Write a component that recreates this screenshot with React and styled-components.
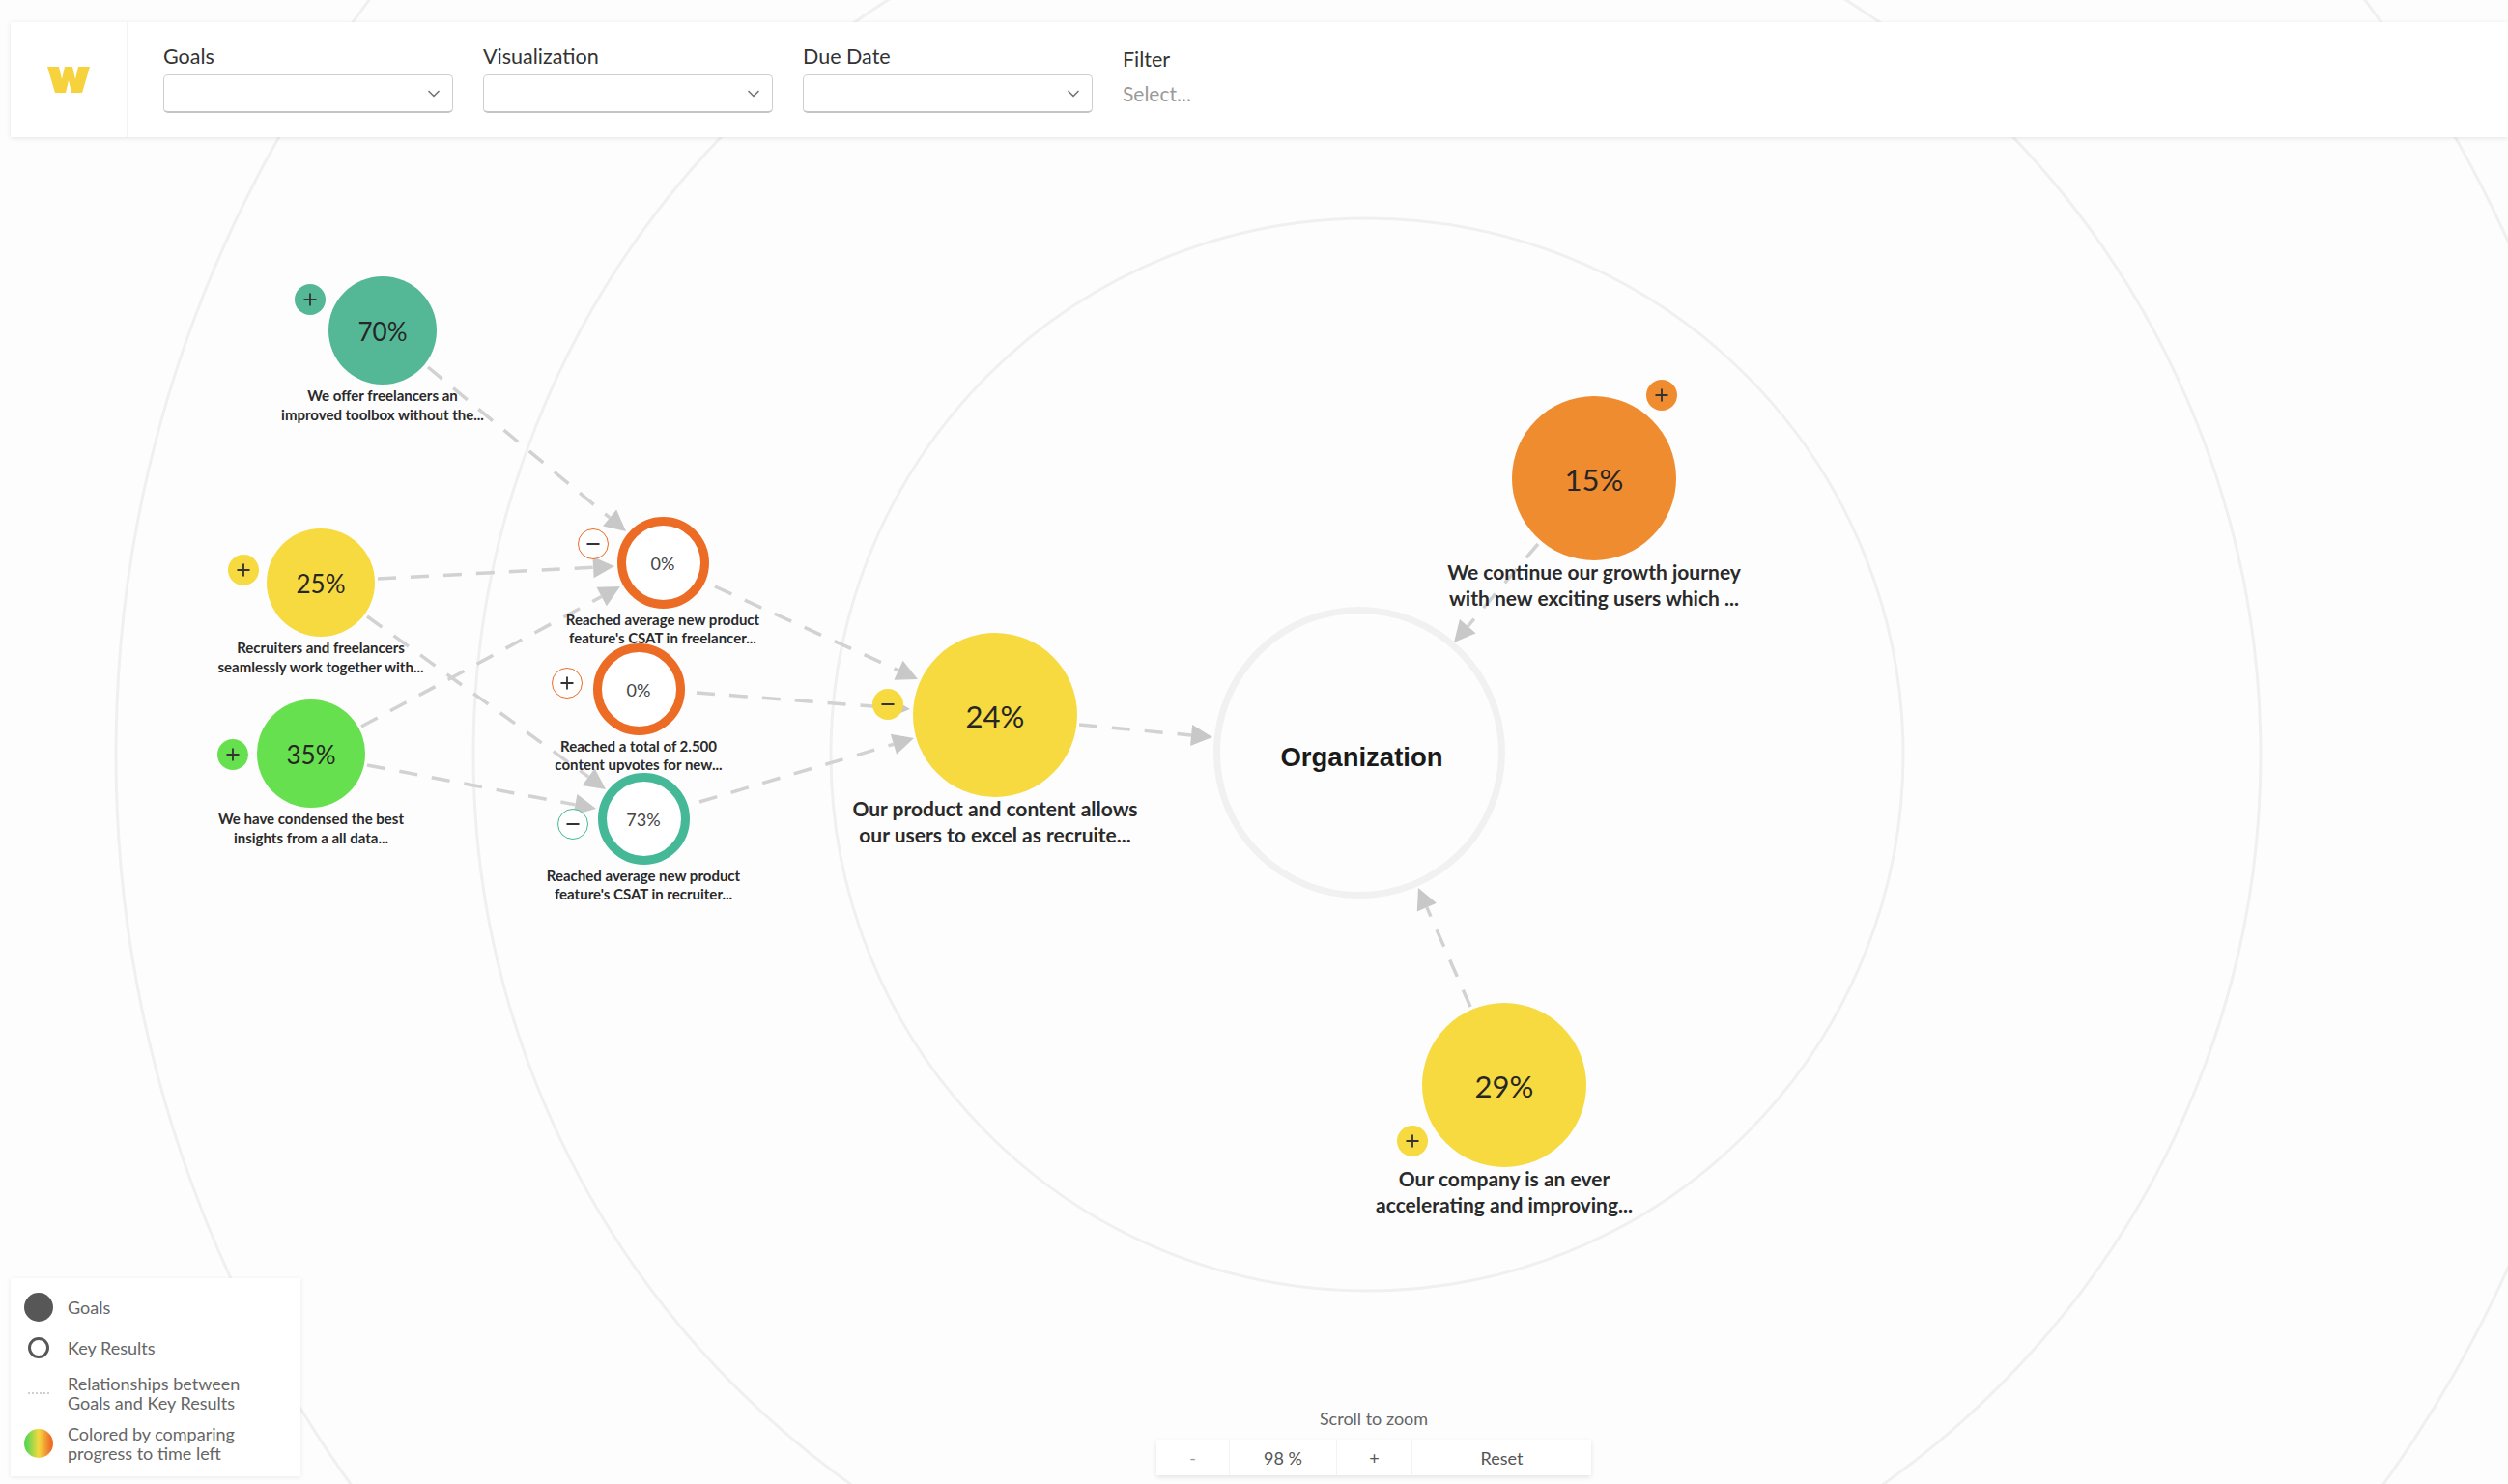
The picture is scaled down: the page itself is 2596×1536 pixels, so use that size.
import React from 'react';
import styled, { createGlobalStyle } from 'styled-components';
import { ChevronDown, Plus, Minus } from 'lucide-react';

const GlobalStyle = createGlobalStyle`
    html, body {
        margin: 0;
        padding: 0;
        background: #fdfdfd;
    }
    body {
        font-family: Lato, "Open Sans", sans-serif;
    }
`;

const YELLOW = '#f6da40';
const ORANGE = '#f08c30';
const GREEN = '#66e04e';
const TEAL = '#54b896';
const RING_ORANGE = '#ec6c26';
const RING_TEAL = '#45b898';

const CENTER = { x: 1415, y: 781 };
const RADII = [555, 925, 1295];

const EDGES = [
    [443, 380, 648, 550],
    [391, 599, 636, 586],
    [374, 752, 642, 607],
    [380, 638, 627, 817],
    [380, 792, 617, 837],
    [740, 607, 950, 703],
    [721, 717, 942, 734],
    [724, 830, 946, 764],
    [1117, 750, 1255, 763],
    [1592, 563, 1505, 665],
    [1522, 1042, 1468, 919],
];

const NODES = [
    { x: 396, y: 342, size: 112, pct: '70%', color: TEAL, badge: 'plus', bx: -75, by: -32, lines: ['We offer freelancers an', 'improved toolbox without the...'] },
    { x: 332, y: 603, size: 112, pct: '25%', color: YELLOW, badge: 'plus', bx: -80, by: -13, lines: ['Recruiters and freelancers', 'seamlessly work together with...'] },
    { x: 322, y: 780, size: 112, pct: '35%', color: GREEN, badge: 'plus', bx: -81, by: 1, lines: ['We have condensed the best', 'insights from a all data...'] },
    { x: 686, y: 582, size: 95, pct: '0%', ring: RING_ORANGE, badge: 'minus', bx: -72, by: -19, lines: ['Reached average new product', "feature's CSAT in freelancer..."] },
    { x: 661, y: 713, size: 95, pct: '0%', ring: RING_ORANGE, badge: 'plus', bx: -74, by: -6, lines: ['Reached a total of 2.500', 'content upvotes for new...'] },
    { x: 666, y: 847, size: 95, pct: '73%', ring: RING_TEAL, badge: 'minus', bx: -73, by: 6, lines: ['Reached average new product', "feature's CSAT in recruiter..."] },
    { x: 1030, y: 740, size: 170, pct: '24%', color: YELLOW, badge: 'minus', bx: -111, by: -11, large: true, lines: ['Our product and content allows', 'our users to excel as recruite...'] },
    { x: 1650, y: 495, size: 170, pct: '15%', color: ORANGE, badge: 'plus', bx: 70, by: -86, large: true, lines: ['We continue our growth journey', 'with new exciting users which ...'] },
    { x: 1557, y: 1123, size: 170, pct: '29%', color: YELLOW, badge: 'plus', bx: -95, by: 58, large: true, lines: ['Our company is an ever', 'accelerating and improving...'] },
];

const Page = styled.div`
    position: relative;
    box-sizing: border-box;
    width: 2596px;
    height: 1536px;
    overflow: hidden;
    padding: 23px 0 8px 11px;
    background: #fdfdfd;
    display: flex;
    flex-direction: column;
    justify-content: space-between;
`;

const Canvas = styled.div`
    position: absolute;
    inset: 0;
`;

const CanvasDrawing = styled.svg`
    position: absolute;
    inset: 0;
`;

const Toolbar = styled.header`
    position: relative;
    display: flex;
    height: 119px;
    background: #fff;
    box-shadow: 0 1px 5px rgba(0, 0, 0, 0.1);
`;

const LogoCell = styled.div`
    width: 120px;
    border-right: 1px solid #f3f3f3;
    display: flex;
    align-items: center;
    justify-content: center;
`;

const Fields = styled.div`
    display: flex;
    gap: 31px;
    padding: 23px 0 0 37px;
`;

const Field = styled.div`
    width: 300px;
`;

const FieldLabel = styled.div`
    height: 24px;
    line-height: 24px;
    margin-bottom: 7px;
    font-size: 21.5px;
    color: #333;
`;

const SelectBox = styled.div`
    box-sizing: border-box;
    height: 40px;
    padding-right: 9px;
    display: flex;
    align-items: center;
    justify-content: flex-end;
    background: #fff;
    color: #777;
    border: 1px solid #cfcfcf;
    border-bottom: 2px solid #c4c4c4;
    border-radius: 5px;
`;

const FilterField = styled.div`
    padding-top: 3px;
`;

const FilterValue = styled.div`
    margin-top: 12px;
    line-height: 24px;
    font-size: 21px;
    color: #9a9a9a;
`;

const Bottom = styled.div`
    position: relative;
    display: flex;
    align-items: flex-end;
`;

const Legend = styled.aside`
    box-sizing: border-box;
    width: 300px;
    padding: 15px 14px 14px;
    display: flex;
    flex-direction: column;
    gap: 12px;
    background: #fff;
    box-shadow: 0 1px 5px rgba(0, 0, 0, 0.08);
`;

const LegendRow = styled.div`
    display: flex;
    align-items: center;
    gap: 15px;
    min-height: 30px;
    font-size: 18px;
    line-height: 20px;
    color: #666;
`;

const Swatch = styled.div`
    flex: none;
    width: 30px;
    display: flex;
    justify-content: center;
`;

const GoalDot = styled.div`
    width: 30px;
    height: 30px;
    border-radius: 50%;
    background: #575757;
`;

const ResultDot = styled.div`
    box-sizing: border-box;
    width: 22px;
    height: 22px;
    border-radius: 50%;
    border: 3px solid #575757;
`;

const DottedLine = styled.div`
    width: 22px;
    border-top: 2px dotted #cfcfcf;
`;

const ProgressDot = styled.div`
    width: 30px;
    height: 30px;
    border-radius: 50%;
    background: linear-gradient(90deg, #5cd652 8%, #f4d940 50%, #ee6e26 92%);
`;

const ZoomArea = styled.div`
    margin-left: 886px;
    display: flex;
    flex-direction: column;
    align-items: center;
    gap: 10px;
`;

const ZoomHint = styled.div`
    font-size: 18px;
    line-height: 24px;
    color: #666;
`;

const ZoomBar = styled.div`
    display: grid;
    grid-template-columns: 75px 111px 78px 186px;
    height: 37px;
    margin-bottom: 1px;
    background: #fff;
    box-shadow: 0 2px 5px rgba(0, 0, 0, 0.1);
`;

const ZoomCell = styled.div`
    display: flex;
    align-items: center;
    justify-content: center;
    font-size: 18px;
    color: ${(p) => (p.$muted ? '#999' : '#555')};
    & + & {
        border-left: 1px solid #f3f3f3;
    }
`;

const Node = styled.div`
    position: absolute;
    left: ${(p) => p.$x - p.$size / 2}px;
    top: ${(p) => p.$y - p.$size / 2}px;
    width: ${(p) => p.$size}px;
    display: flex;
    flex-direction: column;
    align-items: center;
`;

const Bubble = styled.div`
    box-sizing: border-box;
    width: ${(p) => p.$size}px;
    height: ${(p) => p.$size}px;
    padding-top: 2px;
    border-radius: 50%;
    display: flex;
    align-items: center;
    justify-content: center;
    background: ${(p) => p.$color || '#fff'};
    border: ${(p) => (p.$ring ? `9px solid ${p.$ring}` : 'none')};
    color: ${(p) => (p.$ring ? '#444' : '#262626')};
    font-size: ${(p) => (p.$ring ? 18 : p.$size > 150 ? 31 : 26)}px;
`;

const Caption = styled.div`
    margin-top: ${(p) => (p.$large ? -2 : 2)}px;
    white-space: nowrap;
    text-align: center;
    color: #2a2a2a;
    font-weight: 700;
    font-size: ${(p) => (p.$large ? 21 : 15)}px;
    line-height: ${(p) => (p.$large ? 27 : 19.5)}px;
`;

const Badge = styled.div`
    position: absolute;
    left: ${(p) => p.$size / 2 + p.$dx - 16}px;
    top: ${(p) => p.$size / 2 + p.$dy - 16}px;
    box-sizing: border-box;
    width: 32px;
    height: 32px;
    border-radius: 50%;
    display: flex;
    align-items: center;
    justify-content: center;
    color: #333;
    background: ${(p) => p.$color || '#fff'};
    border: ${(p) => (p.$ring ? `1.5px solid ${p.$ring}` : 'none')};
`;

const OrgRing = styled.div`
    position: absolute;
    left: 1256px;
    top: 628px;
    box-sizing: border-box;
    width: 302px;
    height: 302px;
    padding: 9px 0 0 5px;
    border-radius: 50%;
    border: 7px solid #f1f1f1;
    display: flex;
    align-items: center;
    justify-content: center;
    font-family: "Liberation Sans", Arial, sans-serif;
    font-weight: 700;
    font-size: 27.5px;
    color: #1a1a1a;
`;

// draws a dashed link, the line stops where the arrow head starts
const Edge = ({ from }) => {
    const [x1, y1, x2, y2] = from;
    const len = Math.hypot(x2 - x1, y2 - y1);
    const ux = (x2 - x1) / len;
    const uy = (y2 - y1) / len;
    const bx = x2 - ux * 22;
    const by = y2 - uy * 22;
    const head = `${x2},${y2} ${bx - uy * 11},${by + ux * 11} ${bx + uy * 11},${by - ux * 11}`;
    return (
        <g>
            <line x1={x1} y1={y1} x2={bx} y2={by} stroke="#d2d2d2" strokeWidth="3.5" strokeDasharray="19 15" />
            <polygon points={head} fill="#c8c8c8" />
        </g>
    );
};

const BadgeIcon = ({ kind }) => (kind === 'plus'
    ? <Plus size={20} strokeWidth={2.2} />
    : <Minus size={20} strokeWidth={2.2} />);

const Logo = () => (
    <svg width="44" height="27" viewBox="0 0 44 27">
        <polygon
            fill="#f6d23c"
            points="0,0 12,0 15,13 18,0 26,0 29,13 32,0 44,0 36,27 25,27 22,14 19,27 8,27"
        />
    </svg>
);

export default function App() {
    return (
        <Page>
            <GlobalStyle />
            <Canvas>
                <CanvasDrawing width="2596" height="1536">
                    {RADII.map((r) => (
                        <circle key={r} cx={CENTER.x} cy={CENTER.y} r={r} fill="none" stroke="#f0f0f0" strokeWidth="3" />
                    ))}
                </CanvasDrawing>
                <OrgRing>Organization</OrgRing>
                <CanvasDrawing width="2596" height="1536">
                    {EDGES.map((e) => <Edge key={e.join('-')} from={e} />)}
                </CanvasDrawing>
                {NODES.map((n) => (
                    <Node key={n.lines[0]} $x={n.x} $y={n.y} $size={n.size}>
                        <Bubble $size={n.size} $color={n.color} $ring={n.ring}>{n.pct}</Bubble>
                        <Caption $large={n.large}>{n.lines[0]}<br />{n.lines[1]}</Caption>
                        <Badge $size={n.size} $dx={n.bx} $dy={n.by} $color={n.color} $ring={n.ring}>
                            <BadgeIcon kind={n.badge} />
                        </Badge>
                    </Node>
                ))}
            </Canvas>

            <Toolbar>
                <LogoCell><Logo /></LogoCell>
                <Fields>
                    {['Goals', 'Visualization', 'Due Date'].map((name) => (
                        <Field key={name}>
                            <FieldLabel>{name}</FieldLabel>
                            <SelectBox><ChevronDown size={20} /></SelectBox>
                        </Field>
                    ))}
                    <FilterField>
                        <FieldLabel>Filter</FieldLabel>
                        <FilterValue>Select...</FilterValue>
                    </FilterField>
                </Fields>
            </Toolbar>

            <Bottom>
                <Legend>
                    <LegendRow><Swatch><GoalDot /></Swatch>Goals</LegendRow>
                    <LegendRow><Swatch><ResultDot /></Swatch>Key Results</LegendRow>
                    <LegendRow><Swatch><DottedLine /></Swatch><div>Relationships between<br />Goals and Key Results</div></LegendRow>
                    <LegendRow><Swatch><ProgressDot /></Swatch><div>Colored by comparing<br />progress to time left</div></LegendRow>
                </Legend>
                <ZoomArea>
                    <ZoomHint>Scroll to zoom</ZoomHint>
                    <ZoomBar>
                        <ZoomCell $muted>-</ZoomCell>
                        <ZoomCell>98 %</ZoomCell>
                        <ZoomCell>+</ZoomCell>
                        <ZoomCell>Reset</ZoomCell>
                    </ZoomBar>
                </ZoomArea>
            </Bottom>
        </Page>
    );
}
